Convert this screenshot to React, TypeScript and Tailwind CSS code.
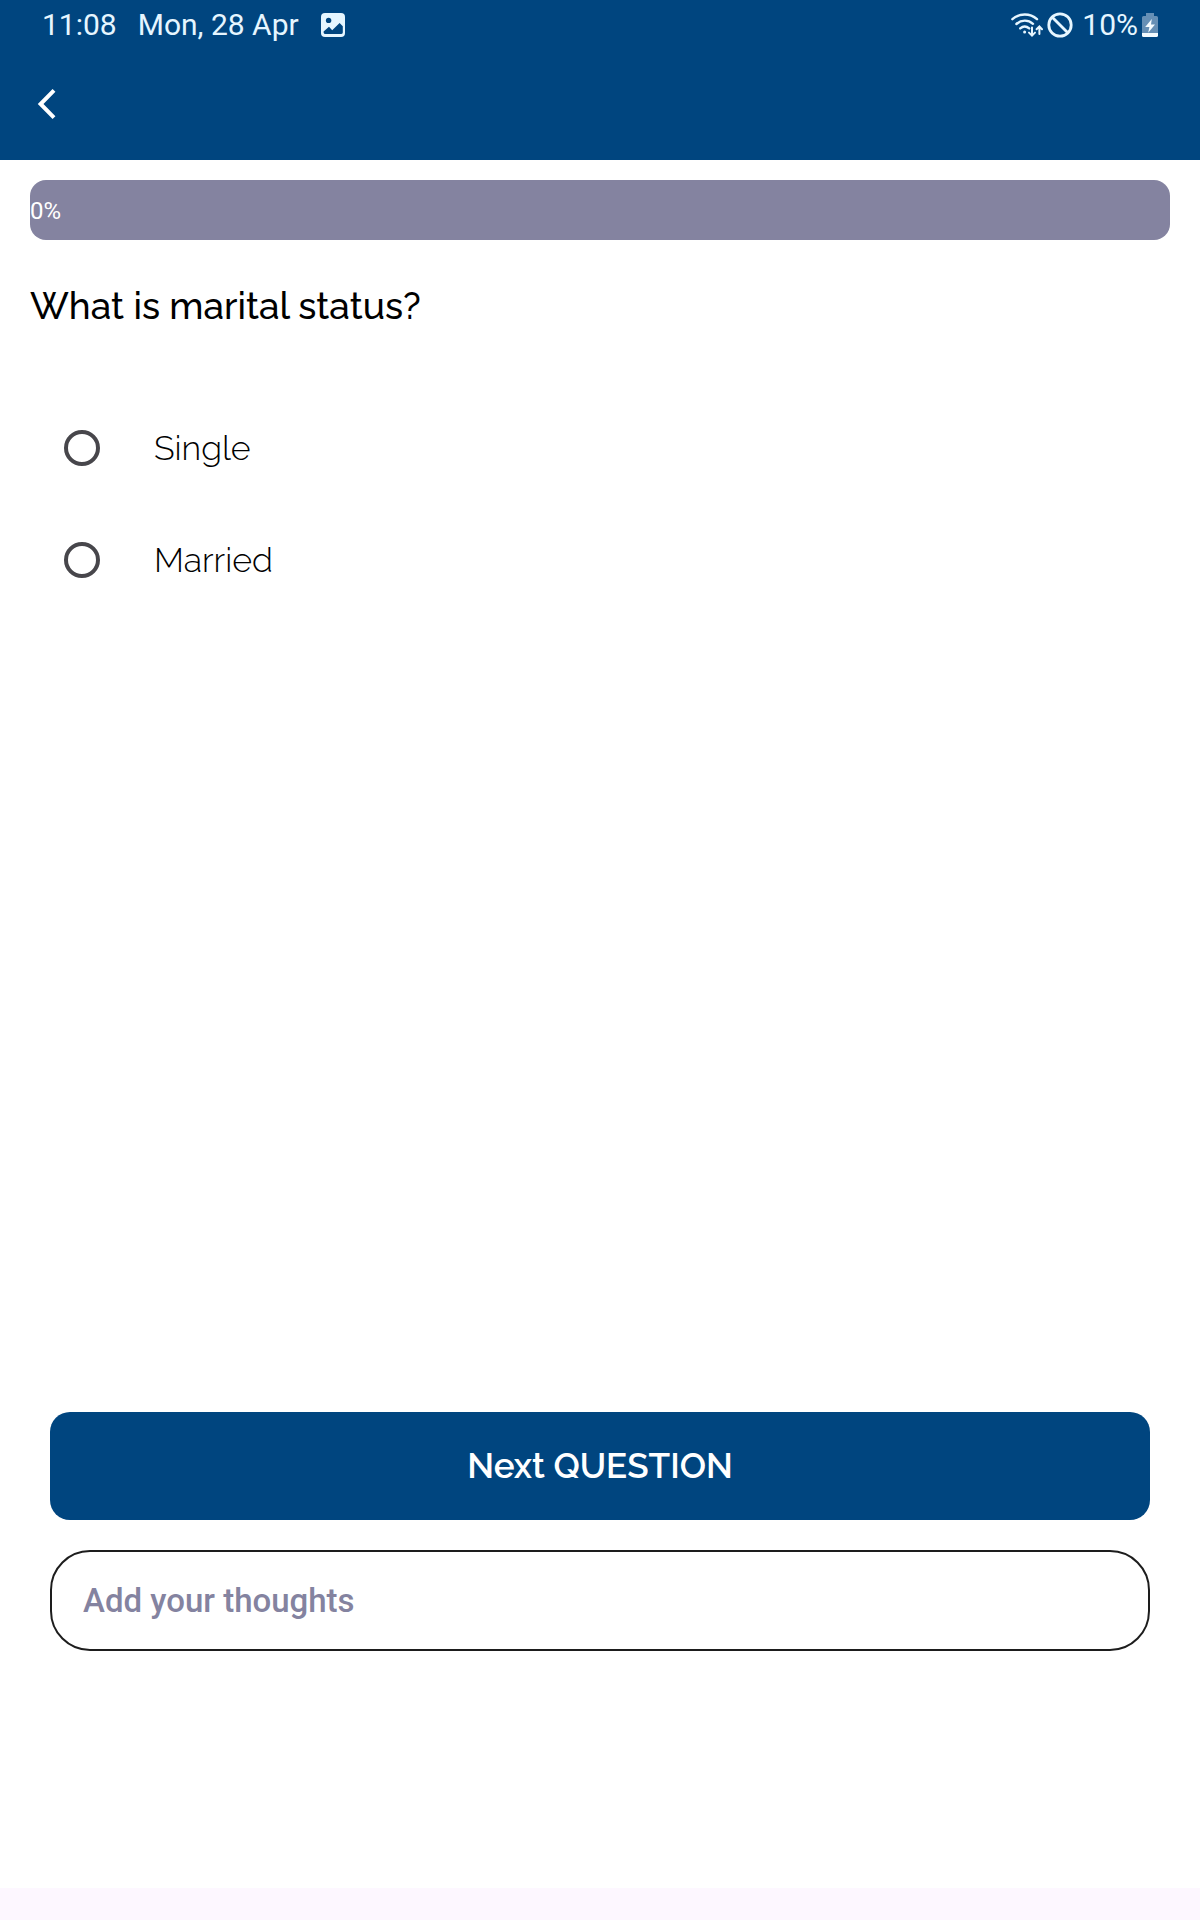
import { useState } from "react";

const OPTIONS = ["Single", "Married"];

function PictureIcon() {
  return (
    <svg viewBox="0 0 24 24" className="size-6" aria-hidden="true">
      <rect width="24" height="24" rx="4" fill="#e6f6ff" />
      <circle cx="7.6" cy="7.4" r="2.7" fill="#00457f" />
      <path d="M2.600 19.400V18.600L8 13.800l3.200 3.400 7.400-7.200 3.200 3.200v6.200a1.800 1.800 0 0 1-1.800 1.600H4.400A1.800 1.800 0 0 1 2.600 19.400Z" fill="#00457f" />
    </svg>
  );
}

function WifiIcon() {
  return (
    <svg viewBox="0 0 32 26" className="h-[26px] w-8" fill="none" stroke="#e6f6ff" strokeWidth="2.4" strokeLinecap="round" aria-hidden="true">
      <path d="M1.4 7.2C8.6.9 19 .9 26 7.2" />
      <path d="M5.4 12c5-4.4 11.8-4.4 16.6-.2" />
      <path d="M9.2 16.4c2.8-2.5 6.2-2.500 9 0" />
      <circle cx="13.6" cy="20" r="1.5" fill="#e6f6ff" stroke="none" />
      <path d="M21 15.6v7.600M18 20.6l3 3 3-3" strokeWidth="2" />
      <path d="M28.4 22v-7.400M25.6 17.2l2.8-2.800 2.600 2.800" strokeWidth="2" />
    </svg>
  );
}

function BlockedIcon() {
  return (
    <svg viewBox="0 0 26 26" className="size-[26px]" fill="none" stroke="#e6f6ff" strokeWidth="2.8" aria-hidden="true">
      <circle cx="13" cy="13" r="11.2" />
      <path d="m5 5 16 16" />
    </svg>
  );
}

function BatteryIcon() {
  return (
    <svg viewBox="0 0 16 24" className="h-6 w-4" aria-hidden="true">
      <path d="M4 0h8v3h2.4A1.6 1.6 0 0 1 16 4.600V20H0V4.600A1.6 1.6 0 0 1 1.600 3H4Z" fill="#668fb5" />
      <path d="M0 20h16v2.400A1.600 1.600 0 0 1 14.400 24H1.600A1.600 1.600 0 0 1 0 22.400Z" fill="#f4fbff" />
      <path d="M9.800 6 3.200 14h4.200l-1.200 5.800 6.800-8.200H9Z" fill="#f4fbff" />
    </svg>
  );
}

export default function App() {
  const [choice, setChoice] = useState("");
  const progress = 0;

  return (
    <div className="flex min-h-screen flex-col bg-white text-black">
      <header className="bg-[#00457f]">
        <div className="flex h-12 items-center justify-between px-[42px] pt-px font-['Roboto',sans-serif] text-[30px] leading-9 text-[#e6f6ff]">
          <div className="flex items-center">
            <span>11:08</span>
            <span className="ml-[21px]">Mon, 28 Apr</span>
            <span className="ml-[22px]">
              <PictureIcon />
            </span>
          </div>
          <div className="flex items-center">
            <WifiIcon />
            <span className="ml-1">
              <BlockedIcon />
            </span>
            <span className="ml-[9px]">10%</span>
            <span className="ml-1">
              <BatteryIcon />
            </span>
          </div>
        </div>
        <div className="flex h-28 items-center px-[15px]">
          <button type="button" aria-label="Back" className="flex size-16 items-center justify-center">
            <svg viewBox="0 0 20 32" className="h-8 w-5" fill="none" stroke="#fff" strokeWidth="4" aria-hidden="true">
              <path d="M17 2.400 3.600 16 17 29.600" />
            </svg>
          </button>
        </div>
      </header>

      <main className="flex flex-1 flex-col font-['Raleway','Lato',sans-serif]">
        <div className="px-[30px] pt-5">
          <div
            role="progressbar"
            aria-label="Progress"
            aria-valuenow={progress}
            aria-valuemin={0}
            aria-valuemax={100}
            className="relative flex h-[60px] items-center overflow-hidden rounded-2xl bg-[#8483a0] pt-0.5"
          >
            <div className="absolute inset-y-0 left-0 bg-[#00457f]" style={{ width: `${progress}%` }} />
            <span className="relative font-['Roboto',sans-serif] text-2xl text-white">{progress}%</span>
          </div>
        </div>

        <fieldset>
          <legend className="px-[30px] pt-[42px] text-[37px] leading-[48px] font-medium">What is marital status?</legend>
          <div className="pt-[62px]">
            {OPTIONS.map((option) => (
              <label key={option} className="flex h-28 items-center gap-[54px] px-16 text-[34px] font-light">
                <input
                  type="radio"
                  name="marital-status"
                  value={option}
                  checked={choice === option}
                  onChange={() => setChoice(option)}
                  className="size-9 appearance-none rounded-full border-4 border-[#47464b] checked:border-[10px] checked:border-[#00457f]"
                />
                {option}
              </label>
            ))}
          </div>
        </fieldset>

        <div className="mt-auto flex flex-col gap-[30px] px-[50px] pb-[237px]">
          <button type="button" className="h-[108px] rounded-[20px] bg-[#00457f] text-[35px] font-semibold text-white">
            Next QUESTION
          </button>
          <input
            type="text"
            aria-label="Add your thoughts"
            placeholder="Add your thoughts"
            className="h-[101px] rounded-[40px] border-2 border-[#1d1d1d] px-[31px] font-['Roboto',sans-serif] text-[33px] font-medium placeholder:text-[#8483a0]"
          />
        </div>
      </main>

      <div className="h-8 bg-[#fdf7ff]" />
    </div>
  );
}
